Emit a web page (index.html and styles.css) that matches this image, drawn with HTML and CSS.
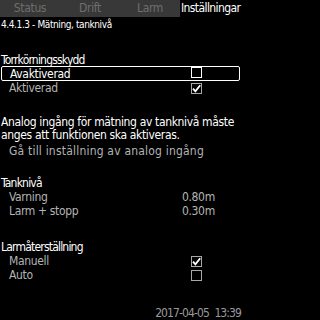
FILE: index.html
```html
<!DOCTYPE html>
<html lang="sv">
<head>
<meta charset="utf-8">
<title>4.4.1.3 - Mätning, tanknivå</title>
<link rel="stylesheet" href="styles.css">
</head>
<body>
<div class="screen">
  <nav class="tabs">
    <div class="tab">Status</div>
    <div class="tab">Drift</div>
    <div class="tab">Larm</div>
    <div class="tab active">Inställningar</div>
  </nav>
  <div class="crumb">4.4.1.3 - Mätning, tanknivå</div>

  <section class="group g1">
    <div class="heading">Torrkörningsskydd</div>
    <div class="row selected">
      <span class="label">Avaktiverad</span>
      <span class="box white"></span>
    </div>
    <div class="row">
      <span class="label">Aktiverad</span>
      <span class="box"><svg viewBox="0 0 11 11" width="11" height="11"><path d="M2 5.6 L4.4 8.4 L9.2 2.2" fill="none" stroke="#fff" stroke-width="1.8"/></svg></span>
    </div>
  </section>

  <section class="group g2">
    <p class="note">Analog ingång för mätning av tanknivå måste anges att funktionen ska aktiveras.</p>
    <div class="row link"><span class="label">Gå till inställning av analog ingång</span></div>
  </section>

  <section class="group g3">
    <div class="heading">Tanknivå</div>
    <div class="row"><span class="label">Varning</span><span class="value">0.80m</span></div>
    <div class="row"><span class="label">Larm + stopp</span><span class="value">0.30m</span></div>
  </section>

  <section class="group g4">
    <div class="heading">Larmåterställning</div>
    <div class="row">
      <span class="label">Manuell</span>
      <span class="box"><svg viewBox="0 0 11 11" width="11" height="11"><path d="M2 5.6 L4.4 8.4 L9.2 2.2" fill="none" stroke="#fff" stroke-width="1.8"/></svg></span>
    </div>
    <div class="row">
      <span class="label">Auto</span>
      <span class="box"></span>
    </div>
  </section>

  <footer class="stamp">2017-04-05 13:39</footer>
</div>
</body>
</html>
```

FILE: styles.css
```css
* { box-sizing: border-box; }
html, body { margin: 0; padding: 0; background: #000; }
.screen {
  width: 242px;
  height: 320px;
  background: #000;
  color: #fff;
  font-family: "DejaVu Sans Condensed", "Liberation Sans", sans-serif;
  font-size: 12px;
  letter-spacing: -0.35px;
  line-height: 14px;
  display: flex;
  flex-direction: column;
  overflow: hidden;
}
.tabs {
  display: flex;
  height: 17px;
  background: #383838;
}
.tab {
  width: 60px;
  text-align: center;
  color: #6e6e6e;
  line-height: 17px;
}
.tab.active {
  width: 62px;
  margin-left: auto;
  background: #000;
  color: #fff;
  text-align: left;
  padding-left: 1px;
  white-space: nowrap;
  letter-spacing: -0.6px;
}
.crumb {
  padding: 1px 0 0 1px;
  font-size: 10px;
  letter-spacing: -0.4px;
}
.group { display: flex; flex-direction: column; }
.g1 { margin-top: 21px; }
.g2 { margin-top: 21px; }
.g3 { margin-top: 18px; }
.g4 { margin-top: 22px; }
.heading {
  padding-left: 1px;
  letter-spacing: -0.8px;
}
.row {
  display: flex;
  align-items: center;
  height: 14px;
  padding-left: 9px;
  color: #b4b4b4;
}
.row.selected {
  height: 15px;
  margin: -1px 2px 0 1px;
  padding-left: 8px;
  border: 1px solid #fff;
  border-radius: 2px;
  color: #fff;
}
.label { flex: 1; white-space: nowrap; }
.value { width: 60px; }
.box {
  width: 11px;
  height: 11px;
  border: 1px solid #a8a8a8;
  margin-right: 40px;
  display: flex;
  align-items: center;
  justify-content: center;
}
.row.selected .box { margin-right: 37px; margin-bottom: 2px; }
.box svg { display: block; margin: -1px; }
.box.white { border-color: #fff; }
.note {
  margin: 0;
  padding-left: 1px;
  line-height: 13px;
}
.link { margin-top: 2px; letter-spacing: 0.2px; }
.stamp {
  margin-top: auto;
  text-align: right;
  color: #9a9a9a;
  line-height: 13px;
  letter-spacing: -0.9px;
  word-spacing: 3px;
  padding-right: 1px;
}
```
